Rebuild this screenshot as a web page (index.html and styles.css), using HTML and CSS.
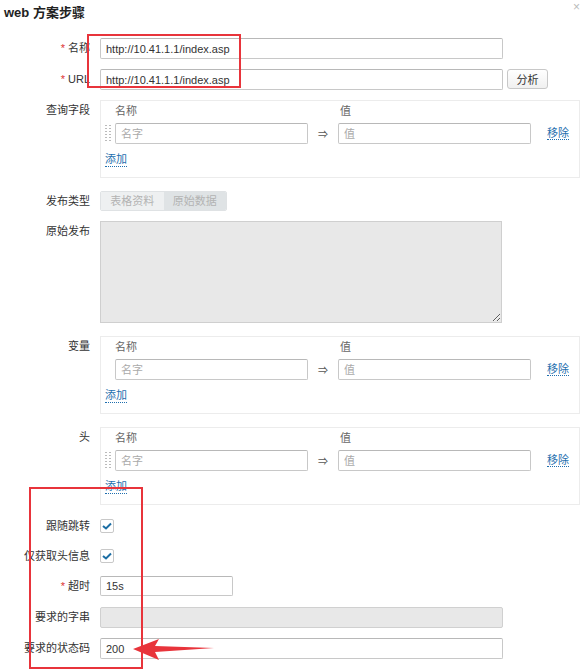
FILE: index.html
```html
<!DOCTYPE html>
<html lang="zh">
<head>
    <meta charset="UTF-8">
    <title>web 方案步骤</title>
    <link rel="stylesheet" href="styles.css">
</head>
<body>
<div class="dialog">
    <div class="title">web 方案步骤</div>
    <span class="close">×</span>

    <div class="form">
        <div class="row">
            <div class="lbl"><span class="req">*</span> 名称</div>
            <div class="ctl"><input class="inp wide" value="http://10.41.1.1/index.asp"></div>
        </div>

        <div class="row">
            <div class="lbl"><span class="req">*</span> URL</div>
            <div class="ctl flex">
                <input class="inp wide" value="http://10.41.1.1/index.asp">
                <button class="btn">分析</button>
            </div>
        </div>

        <div class="row">
            <div class="lbl">查询字段</div>
            <div class="ctl">
                <div class="kv">
                    <div class="kv-head"><span class="kv-name">名称</span><span class="kv-val">值</span></div>
                    <div class="kv-row">
                        <span class="drag"></span>
                        <input class="inp half" placeholder="名字">
                        <span class="arrow">⇒</span>
                        <input class="inp half" placeholder="值">
                        <a class="link remove">移除</a>
                    </div>
                    <a class="link add">添加</a>
                </div>
            </div>
        </div>

        <div class="row gap13">
            <div class="lbl lbl-seg">发布类型</div>
            <div class="ctl">
                <div class="seg"><span class="seg-item">表格资料</span><span class="seg-item on">原始数据</span></div>
            </div>
        </div>

        <div class="row">
            <div class="lbl">原始发布</div>
            <div class="ctl"><textarea class="area" disabled></textarea></div>
        </div>

        <div class="row gap13">
            <div class="lbl">变量</div>
            <div class="ctl">
                <div class="kv">
                    <div class="kv-head"><span class="kv-name">名称</span><span class="kv-val">值</span></div>
                    <div class="kv-row">
                        <span class="drag blank"></span>
                        <input class="inp half" placeholder="名字">
                        <span class="arrow">⇒</span>
                        <input class="inp half" placeholder="值">
                        <a class="link remove">移除</a>
                    </div>
                    <a class="link add">添加</a>
                </div>
            </div>
        </div>

        <div class="row gap13">
            <div class="lbl">头</div>
            <div class="ctl">
                <div class="kv">
                    <div class="kv-head"><span class="kv-name">名称</span><span class="kv-val">值</span></div>
                    <div class="kv-row">
                        <span class="drag"></span>
                        <input class="inp half" placeholder="名字">
                        <span class="arrow">⇒</span>
                        <input class="inp half" placeholder="值">
                        <a class="link remove">移除</a>
                    </div>
                    <a class="link add">添加</a>
                </div>
            </div>
        </div>

        <div class="row gap11 check-row">
            <div class="lbl">跟随跳转</div>
            <div class="ctl"><span class="check">
                <svg width="10" height="8" viewBox="0 0 10 8"><path d="M1 4 L4 6.5 L9 1.5" fill="none" stroke="#1c6ea4" stroke-width="2"/></svg>
            </span></div>
        </div>

        <div class="row check-row">
            <div class="lbl">仅获取头信息</div>
            <div class="ctl"><span class="check">
                <svg width="10" height="8" viewBox="0 0 10 8"><path d="M1 4 L4 6.5 L9 1.5" fill="none" stroke="#1c6ea4" stroke-width="2"/></svg>
            </span></div>
        </div>

        <div class="row">
            <div class="lbl"><span class="req">*</span> 超时</div>
            <div class="ctl"><input class="inp short" value="15s"></div>
        </div>

        <div class="row">
            <div class="lbl">要求的字串</div>
            <div class="ctl"><input class="inp wide off" disabled></div>
        </div>

        <div class="row">
            <div class="lbl">要求的状态码</div>
            <div class="ctl"><input class="inp wide" value="200"></div>
        </div>
    </div>

    <!-- annotations drawn over the form -->
    <div class="mark mark-top"></div>
    <div class="mark mark-bottom"></div>
    <svg class="pointer" width="90" height="28" viewBox="0 0 90 28">
        <polygon points="3,14 29,4 25,11 84,13 25,17 29,25" fill="#e8343b"/>
    </svg>
</div>
</body>
</html>
```

FILE: styles.css
```css
html, body {
    margin: 0;
    background: #fff;
}

body {
    font: 11px "Liberation Sans", "Noto Sans CJK SC", sans-serif;
    color: #333;
}

.dialog {
    position: relative;
    width: 585px;
    height: 670px;
    overflow: hidden;
}

.title {
    font-weight: bold;
    font-size: 13px;
    line-height: 16px;
    padding: 5px 0 0 4px;
    height: 23px;
    color: #222;
}

.close {
    position: absolute;
    top: 0;
    right: 5px;
    color: #bbb;
    font-size: 12px;
}

.form {
    display: flex;
    flex-direction: column;
    gap: 10px;
    margin-top: 10px;
}

.row {
    display: grid;
    grid-template-columns: 90px 1fr;
    column-gap: 10px;
}

.gap11 { margin-top: 1px; }
.gap13 { margin-top: 3px; }

.lbl {
    text-align: right;
    line-height: 21px;
    white-space: nowrap;
    color: #333;
}

.lbl-seg { line-height: 20px; }

.req {
    color: #d33;
}

.flex {
    display: flex;
    gap: 4px;
}

.inp {
    box-sizing: border-box;
    height: 21px;
    border: 1px solid #c8c8c8;
    border-top-color: #b8b8b8;
    border-radius: 2px;
    padding: 0 5px;
    font: 11px "Liberation Sans", "Noto Sans CJK SC", sans-serif;
    color: #333;
    background: #fff;
    outline: none;
    margin: 0;
}

.inp::placeholder {
    color: #aaa;
}

.wide { width: 403px; }
.half { width: 193px; }
.short { width: 133px; height: 20px; }

.off {
    background: #e8e8e8;
    border-color: #d0d0d0;
}

.btn {
    box-sizing: border-box;
    width: 41px;
    height: 20px;
    margin: 0;
    padding: 0;
    border: 1px solid #c8c8c8;
    border-radius: 3px;
    background: linear-gradient(#fff, #f0f0f0);
    font: 11px "Noto Sans CJK SC", sans-serif;
    color: #333;
}

.kv {
    box-sizing: border-box;
    width: 480px;
    height: 78px;
    border: 1px solid #ececec;
    padding: 4px 0 0 4px;
}

.kv-head {
    display: flex;
    line-height: 12px;
    height: 12px;
    color: #666;
    margin-bottom: 6px;
}

.kv-name { margin-left: 10px; width: 225px; }

.kv-row {
    display: flex;
    align-items: center;
}

.drag {
    width: 6px;
    height: 18px;
    margin-right: 4px;
    background:
        repeating-linear-gradient(#bbb 0 1px, transparent 1px 3px) left / 2px 100% no-repeat,
        repeating-linear-gradient(#bbb 0 1px, transparent 1px 3px) right / 2px 100% no-repeat;
}

.drag.blank { background: none; }

.arrow {
    width: 30px;
    text-align: center;
    color: #555;
    font-size: 10px;
}

.link {
    color: #1f6fae;
    border-bottom: 1px dotted #1f6fae;
    cursor: pointer;
}

.remove {
    margin-left: 16px;
    line-height: 12px;
}

.add {
    display: inline-block;
    margin-top: 9px;
    line-height: 13px;
}

.seg {
    display: flex;
    width: 127px;
    height: 20px;
    border: 1px solid #dfe2e4;
    box-sizing: border-box;
    border-radius: 2px;
    overflow: hidden;
}

.seg-item {
    flex: 1;
    text-align: center;
    line-height: 18px;
    color: #b3b3b3;
    background: #eef0f1;
}

.seg-item.on {
    background: #dfe3e5;
}

.area {
    display: block;
    box-sizing: border-box;
    width: 402px;
    height: 102px;
    margin: 0;
    border: 1px solid #cfcfcf;
    background: #e8e8e8;
}

.check-row .lbl { line-height: 20px; }

.check-row .ctl {
    display: flex;
    align-items: center;
    height: 20px;
}

.check {
    box-sizing: border-box;
    width: 14px;
    height: 14px;
    border: 1px solid #c8c8c8;
    border-radius: 2px;
    display: flex;
    align-items: center;
    justify-content: center;
    background: #fff;
}

.mark {
    position: absolute;
    border: 2px solid #e8343b;
    box-sizing: border-box;
}

.mark-top {
    left: 87px;
    top: 34px;
    width: 154px;
    height: 54px;
}

.mark-bottom {
    left: 29px;
    top: 487px;
    width: 114px;
    height: 182px;
}

.pointer {
    position: absolute;
    left: 130px;
    top: 635px;
}
```
